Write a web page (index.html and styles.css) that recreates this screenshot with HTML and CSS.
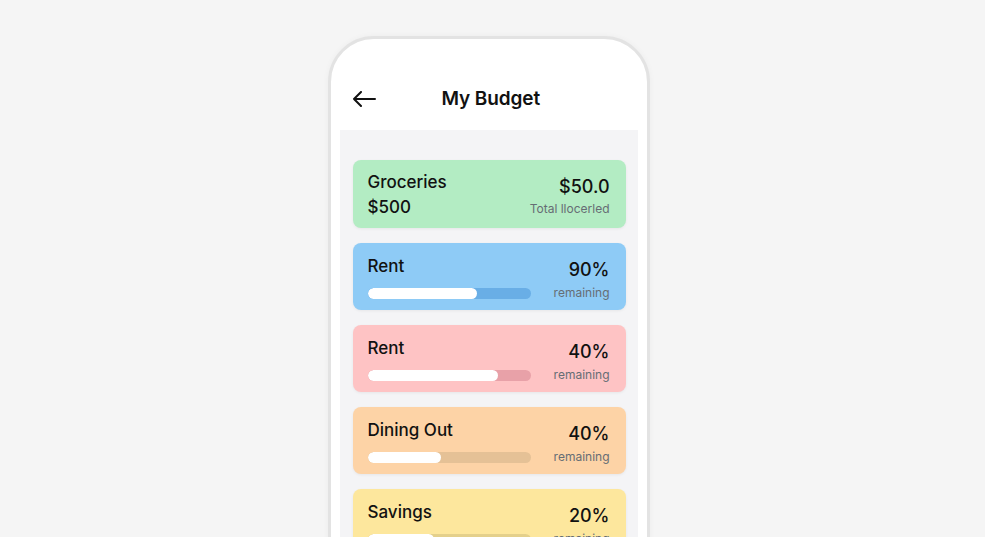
FILE: index.html
```html
<!DOCTYPE html>
<html lang="en">
<head>
    <meta charset="UTF-8">
    <meta name="viewport" content="width=device-width, initial-scale=1.0">
    <title>My Budget</title>
    <link rel="stylesheet" href="styles.css">
</head>
<body>
    <div class="phone">
        <div class="header">
            <svg class="back" width="24" height="16" viewBox="0 0 24 16">
                <path d="M23 8H2M9 1L2 8l7 7" fill="none" stroke="#111" stroke-width="2" stroke-linecap="round" stroke-linejoin="round"/>
            </svg>
            <h1>My Budget</h1>
        </div>
        <div class="panel">
            <div class="card green">
                <div class="left">
                    <div class="name">Groceries</div>
                    <div class="name sub-amount">$500</div>
                </div>
                <div class="right">
                    <div class="value">$50.0</div>
                    <div class="note">Total llocerled</div>
                </div>
            </div>

            <div class="card blue">
                <div class="left">
                    <div class="name">Rent</div>
                    <div class="track"><div class="fill" style="width: 67%;"></div></div>
                </div>
                <div class="right">
                    <div class="value">90%</div>
                    <div class="note">remaining</div>
                </div>
            </div>

            <div class="card pink">
                <div class="left">
                    <div class="name">Rent</div>
                    <div class="track"><div class="fill" style="width: 80%;"></div></div>
                </div>
                <div class="right">
                    <div class="value">40%</div>
                    <div class="note">remaining</div>
                </div>
            </div>

            <div class="card orange">
                <div class="left">
                    <div class="name">Dining Out</div>
                    <div class="track"><div class="fill" style="width: 45%;"></div></div>
                </div>
                <div class="right">
                    <div class="value">40%</div>
                    <div class="note">remaining</div>
                </div>
            </div>

            <div class="card yellow">
                <div class="left">
                    <div class="name">Savings</div>
                    <div class="track"><div class="fill" style="width: 41%;"></div></div>
                </div>
                <div class="right">
                    <div class="value">20%</div>
                    <div class="note">remaining</div>
                </div>
            </div>
        </div>
    </div>
</body>
</html>
```

FILE: styles.css
```css
body {
    margin: 0;
    height: 537px;
    overflow: hidden;
    background-color: #f5f5f5;
    font-family: Inter, "Noto Sans", sans-serif;
    color: #111;
    display: flex;
    justify-content: center;
}
.phone {
    margin-top: 36px;
    margin-right: 8px;
    width: 316px;
    height: 620px;
    background-color: #fff;
    border: 3px solid #e3e3e3;
    border-radius: 46px;
    box-shadow: 0 0 6px rgba(0, 0, 0, 0.04);
}
.header {
    display: flex;
    align-items: center;
    padding: 48px 21px 19px 21px;
}
.back {
    display: block;
}
h1 {
    flex: 1;
    margin: 0 0 0 42px;
    font-size: 19px;
    font-weight: 600;
    line-height: 24px;
    letter-spacing: -0.1px;
    color: #111;
    text-align: left;
    padding-left: 24px;
}
.panel {
    margin: 0 9px;
    background-color: #f4f4f6;
    padding: 30px 12px 0 13px;
    height: 500px;
    display: flex;
    flex-direction: column;
    gap: 15px;
}
.card {
    display: flex;
    justify-content: space-between;
    padding: 12px 16px 9px 15px;
    border-radius: 8px;
    box-shadow: 0 1px 3px rgba(0, 0, 0, 0.06);
}
.card.green {
    background-color: #b3ecc3;
    padding-top: 11px;
    padding-bottom: 10px;
}
.card.blue {
    background-color: #8ecbf6;
}
.card.pink {
    background-color: #fec3c4;
}
.card.orange {
    background-color: #fdd3a6;
}
.card.yellow {
    background-color: #fde79d;
}
.left {
    width: 163px;
}
.name {
    font-size: 17px;
    font-weight: 500;
    line-height: 22px;
}
.sub-amount {
    margin-top: 3px;
}
.track {
    margin-top: 11px;
    height: 11px;
    border-radius: 6px;
    overflow: hidden;
}
.blue .track {
    background-color: #69aee6;
}
.pink .track {
    background-color: #e8a1a8;
}
.orange .track {
    background-color: #e5c196;
}
.yellow .track {
    background-color: #e4d08b;
}
.fill {
    height: 100%;
    background-color: #fff;
    border-radius: 6px;
}
.right {
    text-align: right;
    padding-top: 4px;
}
.green .right {
    padding-top: 5px;
}
.value {
    font-size: 18px;
    font-weight: 500;
    line-height: 22px;
}
.note {
    margin-top: 4px;
    font-size: 12px;
    line-height: 16px;
    color: #666d74;
    white-space: nowrap;
}
.green .note {
    margin-top: 3px;
}
```
